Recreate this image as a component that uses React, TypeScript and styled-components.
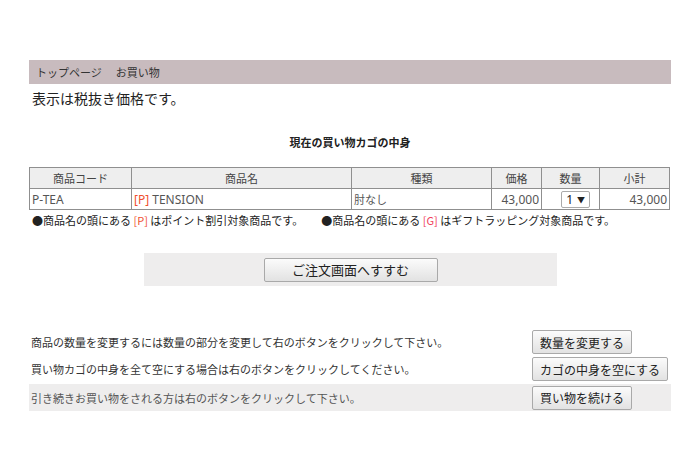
import styled, { createGlobalStyle } from "styled-components";

const GlobalStyle = createGlobalStyle`
  body {
    margin: 0;
    background: #fff;
    font-family: "Noto Sans CJK JP", "Noto Sans", sans-serif;
    color: #333;
  }
`;

const Page = styled.div`
  width: 642px;
  margin: 0 auto;
  padding-top: 60px;
`;

const Breadcrumb = styled.div`
  height: 24px;
  background: #c8bbbe;
  display: flex;
  align-items: center;
  gap: 14px;
  padding-left: 7px;
  font-size: 11px;
  color: #333;
`;

const TaxNote = styled.p`
  margin: 3px 0 0 3px;
  font-size: 14px;
  line-height: 22px;
  color: #222;
`;

const CartTitle = styled.h2`
  margin: 24px 0 0;
  font-size: 11px;
  line-height: 18px;
  font-weight: bold;
  text-align: center;
  color: #222;
`;

const CartTable = styled.table`
  margin-top: 16px;
  width: 641px;
  border-collapse: collapse;
  table-layout: fixed;
  font-size: 11px;
`;

const Th = styled.th<{ $w: number }>`
  width: ${({ $w }) => $w}px;
  height: 20px;
  padding: 0;
  background: #eeeeee;
  border: 1px solid #8f8f8f;
  font-weight: normal;
  color: #444;
  text-align: center;
`;

const Td = styled.td<{ $align?: string }>`
  height: 20px;
  padding: 0 2px;
  border: 1px solid #8f8f8f;
  font-family: "Noto Sans", "Noto Sans CJK JP", sans-serif;
  font-size: 12px;
  color: #555;
  text-align: ${({ $align }) => $align || "left"};
`;

const Jp = styled.span`
  font-family: "Noto Sans CJK JP", sans-serif;
  font-size: 11px;
`;

const Mark = styled.span<{ $tone?: string }>`
  color: ${({ $tone }) => $tone || "#f0502f"};
`;

const QtyBox = styled.span`
  display: inline-flex;
  align-items: center;
  gap: 4px;
  height: 15px;
  padding: 0 4px;
  margin-right: 7px;
  border: 1px solid #aaa;
  border-radius: 2px;
  color: #222;
  font-size: 12px;

  &::after {
    content: "▼";
    font-size: 8px;
  }
`;

const Notes = styled.div`
  display: flex;
  gap: 18px;
  margin-top: 1px;
  padding-left: 3px;
  font-size: 11px;
  line-height: 18px;
  color: #222;
`;

const OrderBox = styled.div`
  margin: 24px 0 0 115px;
  width: 413px;
  height: 33px;
  background: #eeeded;
  display: flex;
  align-items: center;
  justify-content: center;
`;

const Button = styled.button<{ $w?: number; $size?: number }>`
  height: 24px;
  ${({ $w }) => ($w ? `width: ${$w}px;` : "padding: 0 7px;")}
  background: linear-gradient(#fbfbfb, #e2e2e2);
  border: 1px solid #a9a9a9;
  border-radius: 2px;
  font-family: "Noto Sans CJK JP", "Noto Sans", sans-serif;
  font-size: ${({ $size }) => $size || 12}px;
  white-space: nowrap;
  color: #222;
  cursor: pointer;
`;

const Actions = styled.div`
  margin-top: 44px;
  display: flex;
  flex-direction: column;
  gap: 3px;
`;

const ActionRow = styled.div<{ $shade?: boolean }>`
  display: grid;
  grid-template-columns: 503px 1fr;
  align-items: center;
  height: ${({ $shade }) => ($shade ? 27 : 24)}px;
  background: ${({ $shade }) => ($shade ? "#eeeded" : "transparent")};
  font-size: 11px;
  color: #333;
`;

const ActionText = styled.span<{ $muted?: boolean }>`
  padding-left: 2px;
  white-space: nowrap;
  color: ${({ $muted }) => ($muted ? "#555" : "#333")};
`;

const ActionCell = styled.div`
  display: flex;
`;

export default function App() {
  return (
    <>
      <GlobalStyle />
      <Page>
        <Breadcrumb>
          <span>トップページ</span>
          <span>お買い物</span>
        </Breadcrumb>
        <TaxNote>表示は税抜き価格です。</TaxNote>
        <CartTitle>現在の買い物カゴの中身</CartTitle>
        <CartTable>
          <thead>
            <tr>
              <Th $w={101}>商品コード</Th>
              <Th $w={219}>商品名</Th>
              <Th $w={139}>種類</Th>
              <Th $w={49}>価格</Th>
              <Th $w={57}>数量</Th>
              <Th $w={69}>小計</Th>
            </tr>
          </thead>
          <tbody>
            <tr>
              <Td>P-TEA</Td>
              <Td>
                <Mark>[P]</Mark> TENSION
              </Td>
              <Td>
                <Jp>肘なし</Jp>
              </Td>
              <Td $align="right">43,000</Td>
              <Td $align="right">
                <QtyBox>1</QtyBox>
              </Td>
              <Td $align="right">43,000</Td>
            </tr>
          </tbody>
        </CartTable>
        <Notes>
          <span>
            ●商品名の頭にある <Mark>[P]</Mark> はポイント割引対象商品です。
          </span>
          <span>
            ●商品名の頭にある <Mark $tone="#f0405a">[G]</Mark> はギフトラッピング対象商品です。
          </span>
        </Notes>
        <OrderBox>
          <Button $w={174} $size={13}>ご注文画面へすすむ</Button>
        </OrderBox>
        <Actions>
          <ActionRow>
            <ActionText>商品の数量を変更するには数量の部分を変更して右のボタンをクリックして下さい。</ActionText>
            <ActionCell>
              <Button>数量を変更する</Button>
            </ActionCell>
          </ActionRow>
          <ActionRow>
            <ActionText>買い物カゴの中身を全て空にする場合は右のボタンをクリックしてください。</ActionText>
            <ActionCell>
              <Button>カゴの中身を空にする</Button>
            </ActionCell>
          </ActionRow>
          <ActionRow $shade>
            <ActionText $muted>引き続きお買い物をされる方は右のボタンをクリックして下さい。</ActionText>
            <ActionCell>
              <Button>買い物を続ける</Button>
            </ActionCell>
          </ActionRow>
        </Actions>
      </Page>
    </>
  );
}
